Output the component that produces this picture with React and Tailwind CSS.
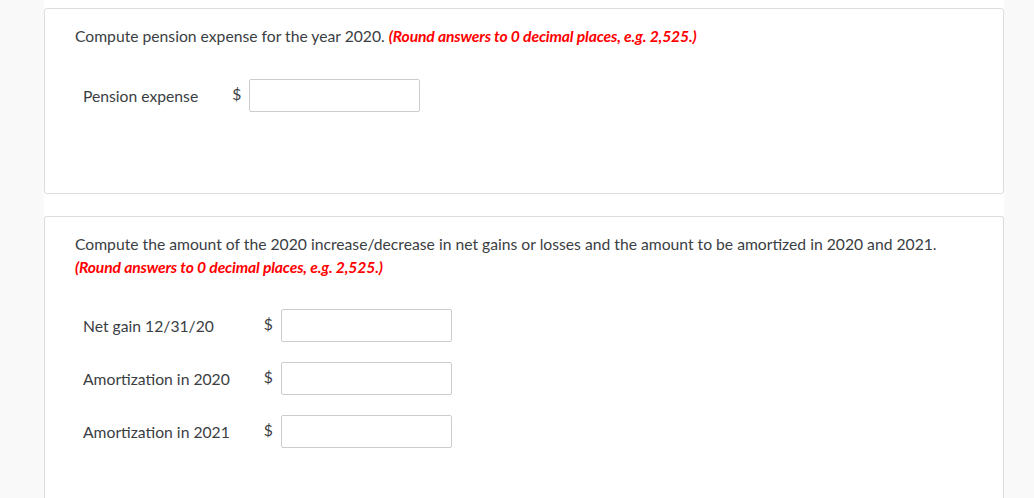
import React from "react";

const Row = ({ label }) => (
  <>
    <div className="pr-[34px] text-[15.7px] text-[#3a3e43] h-[32px] leading-[34px]">{label}</div>
    <div className="flex items-center h-[32px]">
      <span className="text-[15.7px] text-[#3a3e43] mr-[8px] -mt-[1px]">$</span>
      <div className="w-[171px] h-[33px] border border-[#cccccc] rounded-[2px] bg-white"></div>
    </div>
  </>
);

export default function App() {
  return (
    <div className="min-h-[498px] w-[1034px] bg-[#f9f9f9] flex" style={{ fontFamily: "Lato, 'Open Sans', sans-serif" }}>
      <div className="ml-[44px] w-[960px] bg-white pt-[8px] flex flex-col gap-[22px]">
        <div className="border border-[#dddddd] rounded-[3px] h-[186px] pt-[16px] px-[30px]">
          <p className="text-[15.7px] leading-[23px] text-[#3a3e43]">
            Compute pension expense for the year 2020.{" "}
            <span className="text-[#ff0000] font-bold italic tracking-[-0.15px]">(Round answers to 0 decimal places, e.g. 2,525.)</span>
          </p>
          <div className="mt-[31px] ml-[8px] grid grid-cols-[auto_auto] justify-start">
            <Row label="Pension expense" />
          </div>
        </div>
        <div className="border border-[#dddddd] rounded-t-[3px] border-b-0 h-[282px] pt-[16px] px-[30px]">
          <p className="text-[15.7px] leading-[23px] text-[#3a3e43]">
            Compute the amount of the 2020 increase/decrease in net gains or losses and the amount to be amortized in 2020 and 2021.
            <br />
            <span className="text-[#ff0000] font-bold italic tracking-[-0.15px]">(Round answers to 0 decimal places, e.g. 2,525.)</span>
          </p>
          <div className="mt-[30px] ml-[8px] grid grid-cols-[auto_auto] justify-start gap-y-[21px]">
            <Row label="Net gain 12/31/20" />
            <Row label="Amortization in 2020" />
            <Row label="Amortization in 2021" />
          </div>
        </div>
      </div>
    </div>
  );
}
